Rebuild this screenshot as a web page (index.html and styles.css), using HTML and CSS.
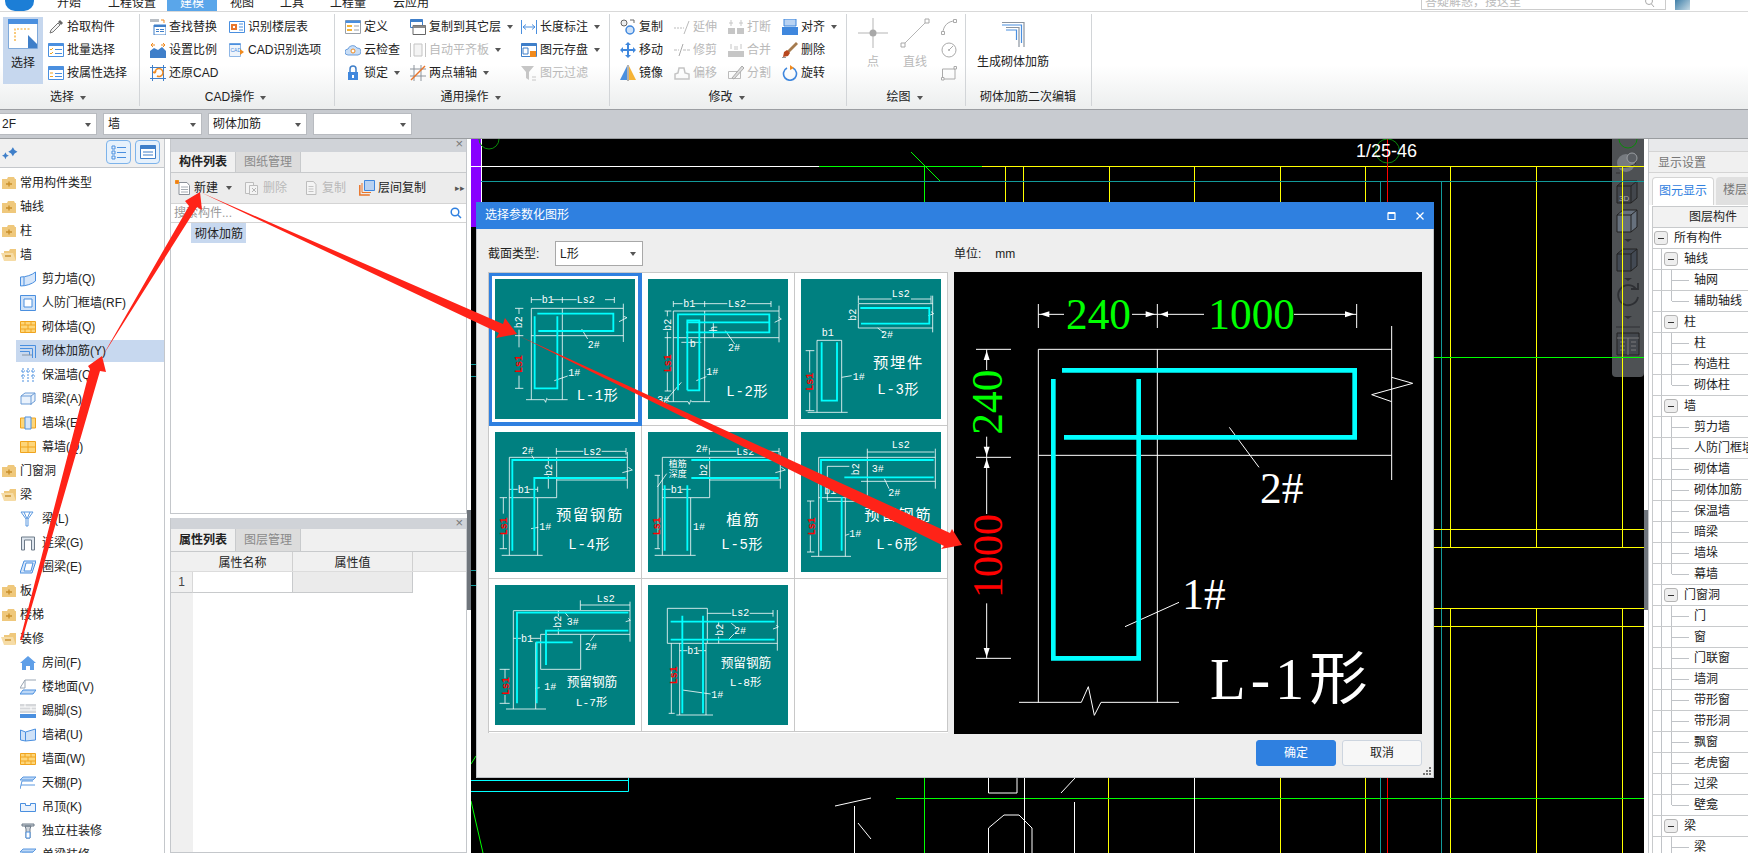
FILE: index.html
```html
<!DOCTYPE html>
<html lang="zh-CN">
<head>
<meta charset="utf-8">
<title>砌体加筋</title>
<link rel="stylesheet" href="styles.css">
</head>
<body>
<svg class="defs" aria-hidden="true">
  <defs>
    <symbol id="fp" viewBox="0 0 16 14"><path d="M1 3h5l1-2h6l1 2h1v10H1z" fill="#efc87c"/><path d="M5 8h6M8 5.500v5" stroke="#c98f2b" stroke-width="1.400"/></symbol>
    <symbol id="fm" viewBox="0 0 16 14"><path d="M3 3h5l1-2h6v11H3z" fill="#efc87c"/><path d="M0 5h12l3 8H3z" fill="#f6dca6"/><path d="M4 8h6" stroke="#c98f2b" stroke-width="1.400"/></symbol>
    <symbol id="brick" viewBox="0 0 16 12"><path d="M.5.5h15v11H.5z" fill="#fdd67a" stroke="#f0a41e"/><path d="M.5 4h15M.5 8h15M5 .5V4M11 .5V4M8 4v4M5 8v3.500M11 8v3.500" stroke="#f0a41e" fill="none"/></symbol>
    <symbol id="rebar" viewBox="0 0 16 16"><path d="M0 2.500h15.500V15M0 5.500h12.500V15M0 8.500h9.500V12" fill="none" stroke="#4a8fdf"/><path d="M2 12h10" stroke="#8a94a0"/></symbol>
    <symbol id="t1" viewBox="0 0 16 16"><path d="M.5 6C6 6 12 4 15.500 1v9C12 13 6 15 .5 15z" fill="#d6e6fa" stroke="#4a8fdf"/><path d="M4 6v9" stroke="#4a8fdf"/></symbol>
    <symbol id="t2" viewBox="0 0 16 16"><path d="M.5.5h15v15H.5z" fill="#cfe2f8" stroke="#4a8fdf"/><path d="M4 4h8v8H4z" fill="#fff" stroke="#4a8fdf"/></symbol>
    <symbol id="t3" viewBox="0 0 16 16"><path d="M3 1v14M8 1v14M13 1v14M1 4h4M6 4h4M11 4h4M1 9h4M11 9h4" stroke="#4a8fdf" stroke-dasharray="2 1" fill="none"/></symbol>
    <symbol id="t4" viewBox="0 0 16 16"><path d="M1 5l4-3h10v8l-4 3H1zM1 5h10v9M11 5l4-3" fill="#eaf2fc" stroke="#6b9bd5"/></symbol>
    <symbol id="t5" viewBox="0 0 16 14"><path d="M.5 2h15v10H.5z" fill="#fdd67a" stroke="#f0a41e"/><path d="M5 1h6v12H5z" fill="#d6e6fa" stroke="#4a8fdf"/></symbol>
    <symbol id="t6" viewBox="0 0 16 12"><path d="M.5.5h15v11H.5z" fill="#fdd67a" stroke="#f0a41e"/><path d="M.5 6h15M8 .5v11" stroke="#f0a41e"/></symbol>
    <symbol id="t7" viewBox="0 0 16 16"><path d="M1 1h12L8 8v7H6V8zM4 1l3 7 3-7" fill="#fff" stroke="#5a98e0"/></symbol>
    <symbol id="t8" viewBox="0 0 16 16"><path d="M1.500 15V2h13v13h-3V5h-7v10z" fill="#dfe6ee" stroke="#6d7a88"/></symbol>
    <symbol id="t9" viewBox="0 0 16 14"><path d="M4 1h12l-4 12H0z" fill="#d6e6fa" stroke="#4a8fdf"/><path d="M6 3h7l-2 8H4z" fill="#fff" stroke="#4a8fdf"/></symbol>
    <symbol id="t10" viewBox="0 0 16 16"><path d="M0 8l8-7 8 7h-2v7H2V8z" fill="#5f9fe8"/><path d="M6 15v-4h4v4z" fill="#fff"/></symbol>
    <symbol id="t11" viewBox="0 0 16 16"><path d="M5 1h11M5 1v8H0M0 9l5-8" fill="none" stroke="#9aa6b4"/><path d="M3 11h13l-3 4H0z" fill="#bcd7f6" stroke="#4a8fdf"/></symbol>
    <symbol id="t12" viewBox="0 0 16 14"><path d="M0 0h16v9H0z" fill="#d5d7da"/><path d="M0 3h16M0 6h16M5 0v3M11 3v3" stroke="#fff"/><path d="M0 10h16v4H0z" fill="#4a8fdf"/></symbol>
    <symbol id="t13" viewBox="0 0 16 14"><path d="M.5 2l5 2v9l-5-1zM5.500 4l10-3v11l-10 1z" fill="#cfe2f8" stroke="#4a8fdf"/></symbol>
    <symbol id="t14" viewBox="0 0 16 14"><path d="M3 1h13l-3 3H0zM1 9h14M2 5h11M2 5L0 13" fill="#bcd7f6" stroke="#5a98e0"/></symbol>
    <symbol id="t15" viewBox="0 0 16 12"><path d="M.5 2.500h5v2h5v-2h5v8H.5z" fill="#eaf2fc" stroke="#4a8fdf"/></symbol>
    <symbol id="t16" viewBox="0 0 16 16"><path d="M2 1h12v2H2zM5 3h6l-1 3v9H6V6z" fill="#cfd4da" stroke="#6d7a88"/><path d="M6 9h4v6H6z" fill="#fff" stroke="#4a8fdf"/></symbol>

    <symbol id="r-pick" viewBox="0 0 16 16"><path d="M2 14l1-3 7-7 2 2-7 7z" fill="#f3f3f3" stroke="#777"/><path d="M10 3l2-2 3 3-2 2z" fill="#666"/></symbol>
    <symbol id="r-batch" viewBox="0 0 16 16"><path d="M.5 1.500h15v13H.5z" fill="#fff" stroke="#4a8fdf"/><path d="M.5 1.500h15V4H.5z" fill="#4a8fdf"/><path d="M2 7l1 1 2-2M2 11l1 1 2-2" stroke="#f0a41e" fill="none"/><path d="M7 7.500h7M7 11.500h7" stroke="#4a8fdf"/></symbol>
    <symbol id="r-attr" viewBox="0 0 16 16"><path d="M.5 1.500h15v13H.5z" fill="#fff" stroke="#4a8fdf"/><path d="M.5 1.500h15V5H.5z" fill="#4a8fdf"/><path d="M2 8h3M2 11.500h3" stroke="#f0a41e"/><path d="M7 8.500h7M7 11.500h7" stroke="#4a8fdf"/></symbol>
    <symbol id="r-find" viewBox="0 0 16 16"><path d="M0 0h9v3H0z" fill="#b9bec4"/><path d="M4 6h12v10H4z" fill="#fff" stroke="#3f7fc9"/><path d="M4 6h12v2H4zM6 10h3v1H6zM6 12h3v1H6zM10 10h4v1h-4zM10 12h4v1h-4z" fill="#3f7fc9"/><path d="M11 1h3v3" fill="none" stroke="#f08a1e"/></symbol>
    <symbol id="r-floor" viewBox="0 0 16 16"><path d="M.5 2.500h15v11H.5z" fill="#fff" stroke="#4a8fdf"/><path d="M2 5h6v6H2z" fill="#e9752a"/><path d="M4 7h2v2H4z" fill="#fff"/><path d="M10 5h4M10 8h4M10 11h4" stroke="#4a8fdf"/></symbol>
    <symbol id="r-scale" viewBox="0 0 16 16"><path d="M0 16V9l4-3 4 2 4-3 4 4v7z" fill="#3f7fc9"/><path d="M1 3h4M15 3h-4M1 3l2-2M1 3l2 2M15 3l-2-2M15 3l-2 2" stroke="#f08a1e" fill="none"/></symbol>
    <symbol id="r-cadopt" viewBox="0 0 16 16"><path d="M.5 1.500h11v13H.5z" fill="#eef4fb" stroke="#8fb7e6"/><path d="M.5 1.500h11V3H.5z" fill="#4a8fdf"/><text x="1.500" y="10" font-size="5" fill="#4a8fdf" font-family="Liberation Sans">CAD</text><path d="M11 7l4 3-4 3z" fill="#f08a1e"/></symbol>
    <symbol id="r-restore" viewBox="0 0 16 16"><path d="M2.500 0v16M13.500 0v16M0 2.500h16M0 13.500h16" stroke="#3f7fc9" fill="none"/><path d="M5 8a4 4 0 1 1 2 3M5 8l-2-1M5 8l1-2" stroke="#f08a1e" fill="none" stroke-width="1.500"/></symbol>
    <symbol id="r-def" viewBox="0 0 16 16"><path d="M.5 1.500h15v13H.5z" fill="#fff" stroke="#9aa0a8"/><path d="M.5 1.500h15V4H.5z" fill="#4a8fdf"/><path d="M2 6h5v2H2zM2 10h5v2H2z" fill="#f5b335"/><path d="M9 7h5M9 11h5" stroke="#9aa0a8"/></symbol>
    <symbol id="r-cloud" viewBox="0 0 16 16"><path d="M3 13a3 3 0 0 1 0-6 5 5 0 0 1 9-1 3.500 3.500 0 0 1 1 7z" fill="#c9def6" stroke="#6d9fdc"/><circle cx="8" cy="9" r="2" fill="#fff" stroke="#f08a1e"/></symbol>
    <symbol id="r-lock" viewBox="0 0 16 16"><path d="M5 7V4a3 3 0 0 1 6 0v3" fill="none" stroke="#3f7fc9" stroke-width="1.500"/><path d="M3 7h10v8H3z" fill="#3f87dd"/><path d="M7 10h2v3H7z" fill="#fff"/></symbol>
    <symbol id="r-copyfl" viewBox="0 0 16 16"><path d="M.5 .5h12v8H.5z" fill="#fff" stroke="#3f7fc9"/><path d="M.5.5h12V3H.5z" fill="#3f7fc9"/><path d="M3 6.500h12.500v9H3z" fill="#fff" stroke="#666"/><path d="M3 6.500h12.500V9H3z" fill="#888"/></symbol>
    <symbol id="r-align" viewBox="0 0 16 16"><path d="M.5 1v14M15.500 1v14" stroke="#c4c4c4"/><path d="M4 2h8v12H4z" fill="#f4f4f4" stroke="#c4c4c4"/></symbol>
    <symbol id="r-axis" viewBox="0 0 16 16"><path d="M0 4h16M0 11h16M4 0v16M11 0v16" stroke="#8d949c"/><path d="M1 15L15 1" stroke="#e9752a" stroke-width="1.400"/></symbol>
    <symbol id="r-len" viewBox="0 0 16 16"><path d="M.5 1v14M15.500 1v14M2 8h12M2 8l3-2.500M2 8l3 2.500M14 8l-3-2.500M14 8l-3 2.500" stroke="#4a8fdf" fill="none"/></symbol>
    <symbol id="r-save" viewBox="0 0 16 16"><path d="M.5 1.500h15v13H.5z" fill="#fff" stroke="#3f7fc9"/><path d="M.5 1.500h15V4H.5z" fill="#3f7fc9"/><path d="M2 6h5v6H2z" fill="#fff" stroke="#3f7fc9"/><path d="M9 9h6v6H9z" fill="#f08a1e"/></symbol>
    <symbol id="r-filter" viewBox="0 0 16 16"><path d="M0 1h13L8 7v8L5 13V7z" fill="#c6c6c6"/><path d="M11 12h4M11 15h4" stroke="#c6c6c6"/></symbol>
    <symbol id="r-copy" viewBox="0 0 16 16"><circle cx="4" cy="4" r="3" fill="#eee" stroke="#666"/><circle cx="10" cy="11" r="4" fill="#cfe2f8" stroke="#3f87dd" stroke-width="1.500"/><path d="M10 1h4v3" fill="none" stroke="#666"/></symbol>
    <symbol id="r-move" viewBox="0 0 16 16"><path d="M8 0l3 3H9v4h4V5l3 3-3 3V9H9v4h2l-3 3-3-3h2V9H3v2L0 8l3-3v2h4V3H5z" fill="#3f87dd"/></symbol>
    <symbol id="r-mirror" viewBox="0 0 16 16"><path d="M7 1v14H0z" fill="#4a8fdf"/><path d="M9 1v14h7z" fill="#f5b335"/><path d="M8 0v16" stroke="#666"/></symbol>
    <symbol id="r-ext" viewBox="0 0 16 16"><path d="M0 9h10" stroke="#bbb" stroke-dasharray="2 1"/><path d="M10 15L15 2" stroke="#bbb"/></symbol>
    <symbol id="r-trim" viewBox="0 0 16 16"><path d="M0 8h5M9 8h7" stroke="#bbb" stroke-dasharray="3 1"/><path d="M5 14L9 2" stroke="#aaa"/></symbol>
    <symbol id="r-offset" viewBox="0 0 16 16"><path d="M1 14V9l3-1 1-5h5l1 5 4 1v5z" fill="none" stroke="#c4c4c4" stroke-width="1.500"/></symbol>
    <symbol id="r-break" viewBox="0 0 16 16"><path d="M0 9h7v6H0zM9 9h7v6H9z" fill="#c6c6c6"/><path d="M3 1v6M13 1v6M1 4h4M11 4h4" stroke="#c6c6c6"/></symbol>
    <symbol id="r-merge" viewBox="0 0 16 16"><path d="M0 9h16v6H0z" fill="#c6c6c6"/><path d="M3 2v5M13 2v5M7 8V4M9 8V4" stroke="#c6c6c6"/></symbol>
    <symbol id="r-split" viewBox="0 0 16 16"><path d="M.5 6.500h12v7H.5z" fill="none" stroke="#bbb"/><path d="M4 13L14 1l2 2L6 14z" fill="#ddd" stroke="#aaa"/></symbol>
    <symbol id="r-alignobj" viewBox="0 0 16 16"><path d="M2 0h12v7H2z" fill="#b8d2f2" stroke="#3f87dd"/><path d="M0 8h16v8H0z" fill="#3f87dd"/></symbol>
    <symbol id="r-del" viewBox="0 0 16 16"><path d="M5 9L14 0l2 2-9 9z" fill="#a57b4e"/><path d="M1 15l1-5 3-2 3 3-2 3z" fill="#b8471e"/><path d="M0 16h4" stroke="#333"/></symbol>
    <symbol id="r-rot" viewBox="0 0 16 16"><path d="M5 3a6.500 6.500 0 1 0 6 0" fill="none" stroke="#3f87dd" stroke-width="1.600"/><path d="M8 0v5l4-2z" fill="#f08a1e"/></symbol>
    <symbol id="r-arc" viewBox="0 0 16 16"><path d="M2 14C2 7 7 2 14 2" fill="none" stroke="#aaa"/><path d="M.5 12.500h3v3h-3zM12.500.5h3v3h-3z" fill="#fff" stroke="#aaa"/></symbol>
    <symbol id="r-circ" viewBox="0 0 16 16"><circle cx="8" cy="8" r="7" fill="none" stroke="#aaa"/><path d="M8 8l4-4" stroke="#aaa"/><circle cx="8" cy="8" r="1" fill="#aaa"/></symbol>
    <symbol id="r-rect" viewBox="0 0 16 16"><path d="M1.500 4h12.500v10H1.500z" fill="none" stroke="#aaa"/><path d="M.5 12.500h2.500v2.500H.5zM13 1.500h2.500V4H13z" fill="#fff" stroke="#aaa"/></symbol>
    <symbol id="p-new" viewBox="0 0 16 16"><path d="M4 2.500h8l2.500 3v9H4z" fill="#fff" stroke="#8a9098"/><path d="M6 7h7M6 9.500h7M6 12h7" stroke="#a5abb2"/><path d="M0 0h4v4H0z" fill="#f5a623"/><path d="M2 0v4M0 2h4" stroke="#e85a1e" stroke-width=".7"/></symbol>
    <symbol id="p-del" viewBox="0 0 16 16"><path d="M1.500 2.500h8v11h-8z" fill="#f4f4f4" stroke="#bdbdbd"/><path d="M5.500 5.500h8v9h-8z" fill="#f4f4f4" stroke="#bdbdbd"/><path d="M8 8l4 4M12 8l-4 4" stroke="#b5b5b5"/></symbol>
    <symbol id="p-copy" viewBox="0 0 16 16"><path d="M3.500 1.500h7l2.500 3v10H3.500z" fill="#f4f4f4" stroke="#bdbdbd"/><path d="M5.500 6.500h5M5.500 9h5M5.500 11.500h5" stroke="#c4c4c4"/></symbol>
    <symbol id="p-floor" viewBox="0 0 16 16"><path d="M.8 5v10h10" fill="none" stroke="#e9752a" stroke-width="1.500"/><path d="M3 3v9.500h9" fill="none" stroke="#e9752a"/><path d="M5.500.5h10v10h-10z" fill="#b8d2f2" stroke="#3f87dd"/></symbol>
  </defs>
</svg>

<div class="app">
  <header class="topbar">
    <div class="logo"></div>
    <nav class="tabs">
      <span class="tab t-kai">开始</span><span class="tab t-gc">工程设置</span><span class="tab tab-on">建模</span><span class="tab t-st">视图</span><span class="tab t-gj">工具</span><span class="tab t-gl">工程量</span><span class="tab t-yy">云应用</span>
    </nav>
    <div class="help">
      <span class="help-text">答疑解惑，搜这里</span>
      <svg class="help-ic" viewBox="0 0 10 10"><circle cx="4" cy="3" r="3.500" fill="none" stroke="#aaa"/><path d="M6.500 6L9 9" stroke="#aaa"/></svg>
    </div>
    <div class="avatar"></div>
  </header>

  <section class="ribbon">
    <div class="grp g1">
      <div class="grp-body">
        <div class="bigsel">
          <svg class="bigsel-ic" viewBox="0 0 30 30"><path d="M.5.500h29v29H.5z" fill="#fff" stroke="#7fa9da"/><path d="M0 0h30v5H0z" fill="#4a8fdf"/><path d="M7 22V10h16" fill="none" stroke="#f5a623" stroke-dasharray="2 1.500" stroke-width="1.200"/><path d="M20 16l9 9v4h-9z" fill="#3f7fc9"/></svg>
          <span>选择</span>
        </div>
        <div class="col">
          <div class="ri"><svg class="ic"><use href="#r-pick"/></svg>拾取构件</div>
          <div class="ri"><svg class="ic"><use href="#r-batch"/></svg>批量选择</div>
          <div class="ri"><svg class="ic"><use href="#r-attr"/></svg>按属性选择</div>
        </div>
      </div>
      <div class="grp-label">选择<i class="car"></i></div>
    </div>
    <div class="grp g2">
      <div class="grp-body">
        <div class="col w79">
          <div class="ri"><svg class="ic"><use href="#r-find"/></svg>查找替换</div>
          <div class="ri"><svg class="ic"><use href="#r-scale"/></svg>设置比例</div>
          <div class="ri"><svg class="ic"><use href="#r-restore"/></svg>还原CAD</div>
        </div>
        <div class="col">
          <div class="ri"><svg class="ic"><use href="#r-floor"/></svg>识别楼层表</div>
          <div class="ri"><svg class="ic"><use href="#r-cadopt"/></svg>CAD识别选项</div>
        </div>
      </div>
      <div class="grp-label">CAD操作<i class="car"></i></div>
    </div>
    <div class="grp g3">
      <div class="grp-body">
        <div class="col w65">
          <div class="ri"><svg class="ic"><use href="#r-def"/></svg>定义</div>
          <div class="ri"><svg class="ic"><use href="#r-cloud"/></svg>云检查</div>
          <div class="ri"><svg class="ic"><use href="#r-lock"/></svg>锁定<i class="car"></i></div>
        </div>
        <div class="col w111">
          <div class="ri"><svg class="ic"><use href="#r-copyfl"/></svg>复制到其它层<i class="car"></i></div>
          <div class="ri off"><svg class="ic"><use href="#r-align"/></svg>自动平齐板<i class="car"></i></div>
          <div class="ri"><svg class="ic"><use href="#r-axis"/></svg>两点辅轴<i class="car"></i></div>
        </div>
        <div class="col">
          <div class="ri"><svg class="ic"><use href="#r-len"/></svg>长度标注<i class="car"></i></div>
          <div class="ri"><svg class="ic"><use href="#r-save"/></svg>图元存盘<i class="car"></i></div>
          <div class="ri off"><svg class="ic"><use href="#r-filter"/></svg>图元过滤</div>
        </div>
      </div>
      <div class="grp-label">通用操作<i class="car"></i></div>
    </div>
    <div class="grp g4">
      <div class="grp-body">
        <div class="col w54">
          <div class="ri"><svg class="ic"><use href="#r-copy"/></svg>复制</div>
          <div class="ri"><svg class="ic"><use href="#r-move"/></svg>移动</div>
          <div class="ri"><svg class="ic"><use href="#r-mirror"/></svg>镜像</div>
        </div>
        <div class="col w54">
          <div class="ri off"><svg class="ic"><use href="#r-ext"/></svg>延伸</div>
          <div class="ri off"><svg class="ic"><use href="#r-trim"/></svg>修剪</div>
          <div class="ri off"><svg class="ic"><use href="#r-offset"/></svg>偏移</div>
        </div>
        <div class="col w54">
          <div class="ri off"><svg class="ic"><use href="#r-break"/></svg>打断</div>
          <div class="ri off"><svg class="ic"><use href="#r-merge"/></svg>合并</div>
          <div class="ri off"><svg class="ic"><use href="#r-split"/></svg>分割</div>
        </div>
        <div class="col">
          <div class="ri"><svg class="ic"><use href="#r-alignobj"/></svg>对齐<i class="car"></i></div>
          <div class="ri"><svg class="ic"><use href="#r-del"/></svg>删除</div>
          <div class="ri"><svg class="ic"><use href="#r-rot"/></svg>旋转</div>
        </div>
      </div>
      <div class="grp-label">修改<i class="car"></i></div>
    </div>
    <div class="grp g5">
      <div class="grp-body">
        <div class="draw">
          <svg class="draw-ic" viewBox="0 0 30 30"><path d="M0 15h30M15 0v30" stroke="#b5b5b5"/><circle cx="15" cy="15" r="3.500" fill="#a8a8a8"/></svg>
          <span>点</span>
        </div>
        <div class="draw">
          <svg class="draw-ic" viewBox="0 0 30 30"><path d="M3 27L27 3" stroke="#b5b5b5"/><path d="M1 25h4v4H1zM25 1h4v4h-4z" fill="#fff" stroke="#a8a8a8"/></svg>
          <span>直线</span>
        </div>
        <div class="col">
          <div class="ri"><svg class="ic"><use href="#r-arc"/></svg></div>
          <div class="ri"><svg class="ic"><use href="#r-circ"/></svg></div>
          <div class="ri"><svg class="ic"><use href="#r-rect"/></svg></div>
        </div>
      </div>
      <div class="grp-label">绘图<i class="car"></i></div>
    </div>
    <div class="grp g6">
      <div class="grp-body">
        <div class="gen">
          <svg class="gen-ic" viewBox="0 0 24 26"><path d="M1 1.500h22V26M5 6.500h13V26" fill="none" stroke="#8a94a0" stroke-width="1.200"/><path d="M1 4h19.500v18M5 9h10.500v10" fill="none" stroke="#4a8fdf" stroke-width="1.200"/></svg>
          <span>生成砌体加筋</span>
        </div>
      </div>
      <div class="grp-label">砌体加筋二次编辑</div>
    </div>
  </section>

  <section class="toolbar">
    <div class="dd dd-a">2F<i class="car"></i></div>
    <div class="dd">墙<i class="car"></i></div>
    <div class="dd">砌体加筋<i class="car"></i></div>
    <div class="dd"><i class="car"></i></div>
  </section>

  <main class="main">
    <aside class="tree-panel">
      <div class="tree-head">
        <svg class="spark" viewBox="0 0 14 12"><path d="M9.500 0l1.500 2.500L13.500 4 11 5.500 9.500 8 8 5.500 5.500 4 8 2.500zM3 4.500l1 2 2 1-2 1-1 2-1-2-2-1 2-1z" fill="#3f7fc9"/></svg>
        <button class="tree-btn"><svg viewBox="0 0 16 16"><path d="M1 2h3v3H1zM1 7h3v3H1zM1 12h3v3H1z" fill="none" stroke="#4a8fdf"/><path d="M6 3.500h9M6 8.500h9M6 13.500h9" stroke="#4a8fdf"/></svg></button>
        <button class="tree-btn"><svg viewBox="0 0 16 16"><path d="M.5 1.500h15v13H.5z" fill="#fff" stroke="#3f7fc9"/><path d="M.5 1.500h15V5H.5z" fill="#3f7fc9"/><path d="M3 8h10M3 11h10" stroke="#3f7fc9"/></svg></button>
      </div>
      <ul class="tree">
        <li class="tr"><svg class="fd"><use href="#fp"/></svg>常用构件类型</li>
        <li class="tr"><svg class="fd"><use href="#fp"/></svg>轴线</li>
        <li class="tr"><svg class="fd"><use href="#fp"/></svg>柱</li>
        <li class="tr"><svg class="fd"><use href="#fm"/></svg>墙</li>
        <li class="tr ch"><svg class="ci"><use href="#t1"/></svg>剪力墙(Q)</li>
        <li class="tr ch"><svg class="ci"><use href="#t2"/></svg>人防门框墙(RF)</li>
        <li class="tr ch"><svg class="ci"><use href="#brick"/></svg>砌体墙(Q)</li>
        <li class="tr ch sel"><svg class="ci"><use href="#rebar"/></svg>砌体加筋(Y)</li>
        <li class="tr ch"><svg class="ci"><use href="#t3"/></svg>保温墙(Q)</li>
        <li class="tr ch"><svg class="ci"><use href="#t4"/></svg>暗梁(A)</li>
        <li class="tr ch"><svg class="ci"><use href="#t5"/></svg>墙垛(E)</li>
        <li class="tr ch"><svg class="ci"><use href="#t6"/></svg>幕墙(Q)</li>
        <li class="tr"><svg class="fd"><use href="#fp"/></svg>门窗洞</li>
        <li class="tr"><svg class="fd"><use href="#fm"/></svg>梁</li>
        <li class="tr ch"><svg class="ci"><use href="#t7"/></svg>梁(L)</li>
        <li class="tr ch"><svg class="ci"><use href="#t8"/></svg>连梁(G)</li>
        <li class="tr ch"><svg class="ci"><use href="#t9"/></svg>圈梁(E)</li>
        <li class="tr"><svg class="fd"><use href="#fp"/></svg>板</li>
        <li class="tr"><svg class="fd"><use href="#fp"/></svg>楼梯</li>
        <li class="tr"><svg class="fd"><use href="#fm"/></svg>装修</li>
        <li class="tr ch"><svg class="ci"><use href="#t10"/></svg>房间(F)</li>
        <li class="tr ch"><svg class="ci"><use href="#t11"/></svg>楼地面(V)</li>
        <li class="tr ch"><svg class="ci"><use href="#t12"/></svg>踢脚(S)</li>
        <li class="tr ch"><svg class="ci"><use href="#t13"/></svg>墙裙(U)</li>
        <li class="tr ch"><svg class="ci"><use href="#brick"/></svg>墙面(W)</li>
        <li class="tr ch"><svg class="ci"><use href="#t14"/></svg>天棚(P)</li>
        <li class="tr ch"><svg class="ci"><use href="#t15"/></svg>吊顶(K)</li>
        <li class="tr ch"><svg class="ci"><use href="#t16"/></svg>独立柱装修</li>
        <li class="tr ch"><svg class="ci"><use href="#t14"/></svg>单梁装修</li>
      </ul>
    </aside>

    <section class="mid">
      <div class="pane pane-a">
        <div class="strip"><span class="x">×</span></div>
        <div class="ptabs"><span class="ptab on">构件列表</span><span class="ptab">图纸管理</span></div>
        <div class="ptool">
          <span class="pt pt-new"><svg class="ic"><use href="#p-new"/></svg>新建<i class="car"></i></span>
          <span class="pt off"><svg class="ic"><use href="#p-del"/></svg>删除</span>
          <span class="pt off"><svg class="ic"><use href="#p-copy"/></svg>复制</span>
          <span class="pt"><svg class="ic"><use href="#p-floor"/></svg>层间复制</span>
          <span class="more">▸▸</span>
        </div>
        <div class="psearch"><span>搜索构件...</span><svg class="s-ic" viewBox="0 0 12 12"><circle cx="5" cy="5" r="3.800" fill="none" stroke="#2f80e0" stroke-width="1.500"/><path d="M8 8l3 3" stroke="#2f80e0" stroke-width="1.500"/></svg></div>
        <div class="plist"><span class="pitem">砌体加筋</span></div>
      </div>
      <div class="pane pane-b">
        <div class="strip strip-b"><span class="x">×</span></div>
        <div class="ptabs ptabs-b"><span class="ptab on">属性列表</span><span class="ptab">图层管理</span></div>
        <div class="prop">
          <div class="prop-head"><span class="ph-name">属性名称</span><span class="ph-val">属性值</span></div>
          <div class="prop-row"><span class="pr-num">1</span><span class="pr-name"></span><span class="pr-val"></span></div>
        </div>
      </div>
    </section>

    <div class="split"><div class="handle"></div></div>

    <section class="canvas">
      <div class="rail">
        <svg class="rail-svg" viewBox="0 0 32 238">
          <circle cx="14" cy="24" r="9" fill="#777b80"/><circle cx="20" cy="19" r="5" fill="#5a5e63" stroke="#9a9ea2"/><path d="M4 34h4M6 28a14 6 0 0 0 18-4" stroke="#333" fill="none"/>
          <path d="M5 47l6-5h14v17l-6 5H5zM5 47h14v17M19 47l6-5" fill="#43474d" stroke="#222"/><text x="7" y="62" font-size="8" fill="#aaa" font-family="Liberation Sans">3D</text>
          <path d="M5 76l6-5h14v17l-6 5H5zM5 76h14v17M19 76l6-5" fill="#67717d" stroke="#222"/><path d="M12 100h8l-4 3z" fill="#2e3034"/>
          <path d="M5 115l6-5h14v17l-6 5H5zM5 115h14v17M19 115l6-5" fill="#434a54" stroke="#222"/><path d="M12 139h8l-4 3z" fill="#2e3034"/>
          <path d="M24 150a10 10 0 1 0 2 8" fill="none" stroke="#2e3034" stroke-width="1.800"/><path d="M19 150h7v-6" fill="none" stroke="#2e3034" stroke-width="1.800"/><path d="M12 177h8l-4 3z" fill="#2e3034"/>
          <path d="M4 188h24" stroke="#2e3034"/>
          <path d="M5 194h22v22H5z" fill="#43474d" stroke="#222"/><path d="M5 199h22M16 199v17M8 203h5M8 207h5M8 211h5M19 203h5M19 207h5M19 211h5" stroke="#888" stroke-width=".8"/>
        </svg>
      </div>

      <svg class="cad" viewBox="471 139 1173 714">
        <path d="M471 139h10v88h-10z" fill="#8800ff"/>
        <g class="ln">
          <path class="wh" d="M471 166.500H819M481.500 139v63"/>
          <path class="gr" d="M819 166.500H982M924.500 166v37M911 152l29 29"/>
          <path class="ye" d="M982 166.500H1644M1005.500 166v37M1023.500 166v37M1109.500 166v37M1194.500 166v37M1280.500 166v37M1365.500 166v37M1450.500 166V547M1536.500 166V547M1622.500 166V547M1450.500 608V853M1536.500 608V853M1622.500 608V853"/>
          <path class="te" d="M481 181.500H1644M1380.500 181v22M1441.500 181V853M471 364.500h5M471 376.500h5M471 570.500h5M471 585.500h5"/>
          <path class="re" d="M1387.500 139v64M1387.500 778v75"/>
          <path class="ye" d="M1434 529.500h210M1434 547.500h210M1434 608.500h210M1434 626.500h210M1108.500 778v75M1280.500 778v75M1365.500 778v75"/>
          <path class="gr" d="M1434 357.500h210M896 798.500H1644M924.500 778v75M471 764l5-8M471 801l12 52"/>
          <path class="cy" d="M471 780.500H628.500V778M471 791.500H628.500V780"/>
          <path class="te" d="M1380.500 778v75"/>
          <path class="wh" d="M1024.500 778v75M1074.500 802v51M1194.500 778v75M854.500 806v47M835 806l36-8M858 823l13 16M988.500 778v15H1017V778M1075 778l-14 15M988.500 853v-25L1004 815h15l13 13v25"/>
          <circle cx="1387.500" cy="151" r="12" class="dg"/>
          <circle cx="489" cy="139" r="10" class="dg"/>
          <circle cx="1628" cy="139" r="9" class="dg"/>
        </g>
        <text x="1356" y="157" class="cad-t">1/25-46</text>
      </svg>

      <div class="dialog">
        <div class="dlg-title">
          <span>选择参数化图形</span>
          <svg class="dlg-c c-max" viewBox="0 0 10 10"><path d="M1 2h7v6.500H1z" fill="none" stroke="#fff" stroke-width="1.200"/><path d="M1 2h7" stroke="#fff" stroke-width="2"/></svg>
          <svg class="dlg-c c-x" viewBox="0 0 10 10"><path d="M1.500 1.500l7 7M8.500 1.500l-7 7" stroke="#fff" stroke-width="1.300"/></svg>
        </div>
        <div class="dlg-body">
          <div class="dlg-top">
            <div class="dlg-type"><span class="lab">截面类型:</span><div class="dsel">L形<i class="car"></i></div></div>
            <div class="dlg-unit"><span>单位:</span><span class="mm">mm</span></div>
          </div>
          <div class="dlg-mid">
            <div class="grid">
              <div class="cell cell-on">
                <svg class="th" viewBox="0 0 420 420">
                  <path class="w" d="M109 62H140M170 62H245M330 62H358M109 54V72M202 54V72M358 54V72M109 88H385M109 170H385M109 88V362M202 88V362M385 74V189M372 128l24-12-10-4M93 362H148l4 8 3-12 4 4H218M60 88H85M60 170H85M60 328H85M72 88V105M72 152V205M72 290V328M260 150l18 30M178 305l40-14"/>
                  <path class="c" d="M127 104H355V156H130M119 112V328H187V112"/>
                  <text class="t" x="140" y="72">b1</text><text class="t" x="245" y="72">Ls2</text>
                  <text class="t" transform="translate(82 148) rotate(-90)">b2</text><text class="r" transform="translate(82 282) rotate(-90)">Ls1</text>
                  <text class="t" x="278" y="206">2#</text><text class="t" x="220" y="292">1#</text>
                  <text class="tl" x="245" y="362">L-1形</text>
                </svg>
              </div>
              <div class="cell">
                <svg class="th" viewBox="0 0 420 420">
                  <path class="w" d="M76 74H104M136 74H238M296 74H369M76 66V84M170 66V84M369 66V84M76 96H393M76 176H393M76 96V368M170 96V368M393 80V190M380 130l20-10-8-6M50 96H70M50 176H70M50 336H70M58 96V112M58 158V232M58 280V336M40 380L100 310M145 305l30-12M232 155l28 40M100 190H160M196 130V175M60 368H120l4 8 4-12 4 4H186"/>
                  <path class="c" d="M90 334V106H364V160H114M118 334V124H154V334H118M115 130H364"/>
                  <text class="t" x="106" y="84">b1</text><text class="t" x="240" y="84">Ls2</text>
                  <text class="t" transform="translate(68 155) rotate(-90)">b2</text><text class="r" transform="translate(68 280) rotate(-90)">Ls1</text>
                  <text class="t" x="125" y="205">b</text><text class="t" transform="translate(208 158) rotate(-90)">h</text>
                  <text class="t" x="240" y="216">2#</text><text class="t" x="175" y="288">1#</text><text class="t" x="28" y="372">3#</text>
                  <text class="tl" x="235" y="350">L-2形</text>
                </svg>
              </div>
              <div class="cell">
                <svg class="th" viewBox="0 0 420 420">
                  <path class="w" d="M172 60H272M330 60H390M172 50V72M390 50V72M172 74H395M172 147H395M172 74V147M395 50V160M382 110l16-6-8-6M48 184V400M122 184V400M48 184H122M20 400H140M230 147l20 15M122 295l30-5M14 215H40M14 395H40M26 215V280M26 340V395"/>
                  <path class="c" d="M178 87H385V134H180M62 190V365H108V190"/>
                  <text class="t" x="272" y="55">Ls2</text><text class="t" transform="translate(165 125) rotate(-90)">b2</text>
                  <text class="t" x="240" y="178">2#</text><text class="t" x="62" y="172">b1</text><text class="t" x="155" y="303">1#</text>
                  <text class="r" transform="translate(36 335) rotate(-90)">Ls1</text>
                  <text class="tc" x="216" y="268">预埋件</text><text class="tl" x="229" y="345">L-3形</text>
                </svg>
              </div>
              <div class="cell">
                <svg class="th" viewBox="0 0 420 420">
                  <path class="w" d="M184 58H265M320 58H393M184 48V68M393 48V68M43 76H397M43 76V370M185 76V197M43 197H185M128 197V370M185 144H397M397 60V170M382 122l30-8-12-8M43 172H68M100 172H128M128 164V180M160 76V98M160 132V170M14 197H36M14 350H36M25 197V245M25 305V350M20 370H143M110 70l10 16M108 290l22-4"/>
                  <path class="c" d="M392 84H52V356M392 138H118V356"/>
                  <text class="t" x="80" y="66">2#</text><text class="t" x="265" y="68">Ls2</text>
                  <text class="t" transform="translate(170 132) rotate(-90)">b2</text><text class="t" x="68" y="182">b1</text>
                  <text class="r" transform="translate(36 310) rotate(-90)">Ls1</text><text class="t" x="133" y="293">1#</text>
                  <text class="tc" x="183" y="265">预留钢筋</text><text class="tl" x="220" y="350">L-4形</text>
                </svg>
              </div>
              <div class="cell">
                <svg class="th" viewBox="0 0 420 420">
                  <path class="w" d="M184 58H265M320 58H393M184 48V68M393 48V68M43 76H397M43 76V370M185 76V197M43 197H185M128 197V370M185 144H397M397 60V170M382 122l30-8-12-8M43 172H68M100 172H128M20 370H143M30 130V350M20 130H36M20 350H36M28 165l28-40"/>
                  <path class="c" d="M130 84H392M130 138H392M50 160V356M118 160V356"/>
                  <text class="t" x="143" y="60">2#</text><text class="t" x="265" y="68">Ls2</text>
                  <text class="t" transform="translate(176 132) rotate(-90)">b2</text><text class="t" x="68" y="182">b1</text>
                  <text class="ts" x="62" y="104">植筋</text><text class="ts" x="62" y="134">深度</text>
                  <text class="r" transform="translate(36 310) rotate(-90)">Ls1</text><text class="t" x="135" y="293">1#</text>
                  <text class="tc" x="235" y="278">植筋</text><text class="tl" x="220" y="350">L-5形</text>
                </svg>
              </div>
              <div class="cell">
                <svg class="th" viewBox="0 0 420 420">
                  <path class="w" d="M199 60H400M199 50V205M403 50V170M53 76H403M53 76V373M53 197H199M133 197V373M79 103V205M79 103H145M79 208H199M180 148H403M30 373H150M18 207H40M18 360H40M28 207V260M28 310V360M250 140l14 30M133 310l12-4"/>
                  <path class="c" d="M398 84H60V356M398 136H130M122 195V356"/>
                  <text class="t" x="272" y="48">Ls2</text><text class="t" transform="translate(175 130) rotate(-90)">b2</text>
                  <text class="t" x="212" y="120">3#</text><text class="t" x="262" y="192">2#</text><text class="t" x="70" y="187">b1</text>
                  <text class="r" transform="translate(42 310) rotate(-90)">Ls1</text><text class="t" x="145" y="315">1#</text>
                  <text class="tc" x="190" y="265">预留钢筋</text><text class="tl" x="226" y="350">L-6形</text>
                </svg>
              </div>
              <div class="cell">
                <svg class="th" viewBox="0 0 420 420">
                  <path class="w" d="M256 60H405M256 46V75M405 50V170M55 77H405M55 77V372M137 148H405M137 148V253H257V148M122 172V372M33 372H153M55 160H78M108 160H137M14 253H44M14 355H44M30 253V280M30 330V355M190 77V95M190 130V148M210 83l10 12M300 148l-14 20M122 310l12-2M392 110l14-4-6-6"/>
                  <path class="c" d="M400 83H66V355M400 137H153V240M233 172H125V355"/>
                  <text class="t" x="305" y="52">Ls2</text><text class="t" transform="translate(198 128) rotate(-90)">b2</text>
                  <text class="t" x="215" y="120">3#</text><text class="t" x="270" y="194">2#</text><text class="t" x="78" y="170">b1</text>
                  <text class="r" transform="translate(42 330) rotate(-90)">Ls1</text><text class="t" x="148" y="316">1#</text>
                  <text class="tm" x="215" y="303">预留钢筋</text><text class="tn" x="242" y="362">L-7形</text>
                </svg>
              </div>
              <div class="cell">
                <svg class="th" viewBox="0 0 420 420">
                  <path class="w" d="M58 70H178V175H58zM178 85H250M305 85H375M375 75V95M178 175H388M388 75V197M375 132l16-6-6-6M95 175V390M174 175V390M85 390H195M70 175V385M62 385H80M103 315l85 12M118 197H95M150 197H174M212 110V125M212 155V175M250 115l15 12M240 165l18-18"/>
                  <path class="c" d="M68 110H380M68 164H380M103 92V385M165 92V385"/>
                  <text class="t" x="250" y="92">Ls2</text><text class="t" transform="translate(224 152) rotate(-90)">b2</text>
                  <text class="t" x="258" y="146">2#</text><text class="t" x="118" y="206">b1</text>
                  <text class="r" transform="translate(86 298) rotate(-90)">Ls1</text><text class="t" x="190" y="340">1#</text>
                  <text class="tm" x="218" y="246">预留钢筋</text><text class="tn" x="245" y="304">L-8形</text>
                </svg>
              </div>
              <div class="cell"></div>
            </div>
            <div class="preview">
              <svg class="pv" viewBox="42 36 1404 1386">
                <path class="pw" d="M295 132V204M652 132V204M1250 132V204M295 163H372M576 163H652M652 163H792M1062 163H1250M295 268H1355M295 586H1355M295 268V1328M652 268V1328M1355 198V660M1355 352L1418 370L1295 404L1355 425M237 1327H424L445 1280L463 1366L483 1327H717M108 268H213M108 592H213M108 1195H213M140 268V330M140 530V762M140 1030V1195M868 502L957 622M555 1100L717 1027"/>
                <path class="pa" d="M300 163l28-9v18zM645 163l-28-9v18zM660 163l24-9v18zM1243 163l-28-9v18zM140 272l-9 28h18zM140 588l-9-28h18zM140 596l-9 28h18zM140 1192l-9-28h18z"/>
                <path class="pc" d="M366 331H1244V532H372M340 357V1195H596V357"/>
                <text class="pg" x="378" y="208">240</text><text class="pg" x="805" y="208">1000</text>
                <text class="pg" transform="translate(186 524) rotate(-90)">240</text>
                <text class="pr" transform="translate(186 1014) rotate(-90)">1000</text>
                <text class="pt-w" x="960" y="730">2#</text><text class="pt-w" x="727" y="1048">1#</text>
                <text class="pt-b" x="810" y="1318">L-1形</text>
              </svg>
            </div>
          </div>
          <div class="dlg-foot"><button class="btn btn-ok">确定</button><button class="btn">取消</button></div>
        </div>
        <svg class="grip" viewBox="0 0 9 9"><path d="M6 0h2v2H6zM3 3h2v2H3zM6 3h2v2H6zM0 6h2v2H0zM3 6h2v2H3zM6 6h2v2H6z" fill="#777"/></svg>
      </div>
    </section>

    <div class="split split-r"><div class="handle"></div></div>

    <aside class="right">
      <div class="r-strip"></div>
      <div class="r-title">显示设置</div>
      <div class="r-tabs"><span class="r-tab on">图元显示</span><span class="r-tab">楼层显示</span></div>
      <div class="r-table">
        <div class="r-head">图层构件</div>
        <div class="rw l0"><i class="bx"></i>所有构件</div>
        <div class="rw l1"><i class="bx"></i>轴线</div>
        <div class="rw l2">轴网</div>
        <div class="rw l2 end">辅助轴线</div>
        <div class="rw l1"><i class="bx"></i>柱</div>
        <div class="rw l2">柱</div>
        <div class="rw l2">构造柱</div>
        <div class="rw l2 end">砌体柱</div>
        <div class="rw l1"><i class="bx"></i>墙</div>
        <div class="rw l2">剪力墙</div>
        <div class="rw l2">人防门框墙</div>
        <div class="rw l2">砌体墙</div>
        <div class="rw l2">砌体加筋</div>
        <div class="rw l2">保温墙</div>
        <div class="rw l2">暗梁</div>
        <div class="rw l2">墙垛</div>
        <div class="rw l2 end">幕墙</div>
        <div class="rw l1"><i class="bx"></i>门窗洞</div>
        <div class="rw l2">门</div>
        <div class="rw l2">窗</div>
        <div class="rw l2">门联窗</div>
        <div class="rw l2">墙洞</div>
        <div class="rw l2">带形窗</div>
        <div class="rw l2">带形洞</div>
        <div class="rw l2">飘窗</div>
        <div class="rw l2">老虎窗</div>
        <div class="rw l2">过梁</div>
        <div class="rw l2 end">壁龛</div>
        <div class="rw l1"><i class="bx"></i>梁</div>
        <div class="rw l2">梁</div>
      </div>
    </aside>
  </main>

  <svg class="arrows" viewBox="0 0 1748 853">
    <path d="M20 640L90 369L88 366L102 356L106 372L100 371L22 640z"/>
    <path d="M102 357L189 206L185 201L200 192L202 210L197 207z"/>
    <path d="M200 192L503 324L505 318L517 334L496 338L499 333z"/>
    <path d="M517 335L950 533L952 529L962 545L941 549L944 546z"/>
  </svg>
</div>
</body>
</html>
```

FILE: styles.css
```css
* { box-sizing: border-box; }
html, body { margin: 0; padding: 0; overflow: hidden; background: #fff; }
body { font: 12px/1.2 "Liberation Sans", "Noto Sans CJK SC", sans-serif; color: #222; }
.defs { position: absolute; width: 0; height: 0; }
.app { position: relative; width: 1748px; height: 853px; overflow: hidden; display: flex; flex-direction: column; }
i { font-style: normal; }
.car { display: inline-block; width: 0; height: 0; margin-left: 6px; border-top: 4px solid #555; border-left: 3.5px solid transparent; border-right: 3.5px solid transparent; vertical-align: middle; }
.off { color: #b9b9b9; }

/* top tabs */
.topbar { height: 12px; flex: none; display: flex; border-bottom: 1px solid #d9d9d9; overflow: hidden; position: relative; }
.logo { width: 29px; height: 11px; margin-left: 5px; margin-right: 5px; background: #1c7ed6; border-radius: 0 0 10px 10px; flex: none; }
.tabs { display: flex; height: 11px; flex: none; margin-left: 18px; }
.tab { width: auto; line-height: 16px; margin-top: -5px; height: 16px; }
.t-gc { margin-left: 27px; }
.tab-on { width: 50px; margin-left: 11px; text-align: center; background: #5aa6ea; color: #fff; }
.t-st { margin-left: 13px; }
.t-gj { margin-left: 26px; }
.t-gl { margin-left: 26px; }
.t-yy { margin-left: 27px; }
.help { margin-left: 992px; width: 245px; height: 10px; border: 1px solid #ccc; border-top: 0; display: flex; align-items: flex-end; flex: none; color: #bbb; position: relative; padding-left: 3px; overflow: hidden; }
.help-text { line-height: 14px; margin-bottom: 0; white-space: nowrap; }
.help-ic { width: 10px; height: 10px; position: absolute; right: 10px; top: -2px; }
.avatar { width: 15px; height: 10px; margin-left: 9px; background: linear-gradient(135deg, #3f7fa8, #c7dbe6); flex: none; }

/* ribbon */
.ribbon { height: 98px; flex: none; display: flex; padding-top: 2px; background: linear-gradient(#fff 0, #fff 55%, #eceeee 100%); border-bottom: 1px solid #9b9ea2; }
.grp { height: 92px; display: flex; flex-direction: column; border-right: 1px solid #d2d5d8; flex: none; }
.g1 { width: 140px; padding-left: 3px; }
.g2 { width: 195px; padding-left: 10px; }
.g3 { width: 275px; padding-left: 10px; }
.g4 { width: 237px; padding-left: 10px; }
.g5 { width: 119px; padding-left: 5px; }
.g6 { width: 126px; padding-left: 11px; }
.grp-body { flex: 1; display: flex; padding-top: 2px; }
.grp-label { height: 18px; line-height: 18px; text-align: center; margin-right: 3px; white-space: nowrap; }
.g2 .grp-label, .g3 .grp-label, .g4 .grp-label { margin-left: -10px; }
.g1 .grp-label { margin-left: -3px; }
.g5 .grp-label { margin-left: -5px; }
.g6 .grp-label { margin-left: -9px; }
.bigsel { width: 40px; height: 67px; margin-right: 5px; margin-top: 1px; background: #c6d7ee; display: flex; flex-direction: column; align-items: center; }
.bigsel-ic { width: 30px; height: 30px; margin-top: 2px; margin-bottom: 7px; }
.col { display: flex; flex-direction: column; flex: none; }
.w79 { width: 79px; }
.w65 { width: 65px; }
.w111 { width: 111px; }
.w54 { width: 54px; }
.ri { height: 22.8px; display: flex; align-items: center; white-space: nowrap; }
.ic { width: 16px; height: 16px; margin-right: 3px; flex: none; }
.draw { width: 42px; display: flex; flex-direction: column; align-items: center; color: #b9b9b9; }
.draw-ic { width: 30px; height: 30px; margin-top: 2px; margin-bottom: 7px; }
.g5 .col { margin-left: 5px; }
.gen { display: flex; flex-direction: column; align-items: center; width: 72px; white-space: nowrap; }
.gen-ic { width: 24px; height: 26px; margin-top: 5px; margin-bottom: 8px; }

/* toolbar */
.toolbar { height: 29px; flex: none; display: flex; gap: 6px; padding-top: 3px; background: #c8cbd0; border-bottom: 1px solid #9a9da0; }
.dd { width: 99px; height: 22px; background: #fff; border: 1px solid #b8bbc0; padding: 0 4px; line-height: 20px; position: relative; }
.dd-a { width: 97px; border-left: 0; padding-left: 2px; }
.dd .car { position: absolute; right: 5px; top: 9px; margin: 0; }

/* main */
.main { flex: 1; display: flex; min-height: 0; }
.tree-panel { width: 165px; flex: none; border-right: 1px solid #c4c7cb; display: flex; flex-direction: column; overflow: hidden; }
.tree-head { height: 29px; flex: none; background: #f0f0f0; border-bottom: 1px solid #c4c7cb; display: flex; align-items: center; padding: 0 4px 3px 2px; gap: 4px; }
.spark { width: 16px; height: 14px; margin-right: auto; margin-top: 4px; }
.tree-btn { width: 25px; height: 24px; padding: 3px; background: #e6f1fc; border: 1px solid #7db3ea; border-radius: 4px; display: flex; align-items: center; justify-content: center; }
.tree-btn svg { width: 16px; height: 16px; }
.tree { list-style: none; margin: 0; padding: 3px 0 0; }
.tr { height: 24px; display: flex; align-items: center; white-space: nowrap; padding-left: 1px; }
.fd { width: 16px; height: 14px; margin-right: 3px; flex: none; }
.ch { padding-left: 20px; }
.ci { width: 16px; height: 16px; margin-right: 6px; flex: none; }
.sel { background: #c7d8ef; margin: 1px 0 1px 16px; height: 22px; padding-left: 4px; }

.mid { width: 297px; margin-left: 5px; flex: none; display: flex; flex-direction: column; gap: 4px; }
.pane { border: 1px solid #c4c7cb; border-top: 0; background: #fff; display: flex; flex-direction: column; }
.pane-a { height: 375px; }
.pane-b { flex: 1; min-height: 0; }
.strip { height: 13px; background: #d0d3d8; position: relative; flex: none; }
.strip-b { height: 11px; }
.x { position: absolute; right: 3px; top: -3px; color: #777; font-size: 13px; line-height: 16px; }
.ptabs { height: 21px; flex: none; display: flex; background: #f0f0f0; border-bottom: 1px solid #c8cacc; }
.ptabs-b { height: 23px; }
.ptab { width: 65px; text-align: center; line-height: 20px; background: #dcdcdc; color: #8a8a8a; border-right: 1px solid #c8cacc; }
.ptabs-b .ptab { line-height: 22px; }
.ptab.on { background: #f0f0f0; color: #222; font-weight: 700; }
.ptool { height: 31px; flex: none; display: flex; align-items: center; background: #ececec; padding-left: 4px; position: relative; border-bottom: 1px solid #d4d4d4; }
.pt { display: flex; align-items: center; }
.pt-new { width: 69px; }
.pt-new .car { margin-left: 8px; }
.pt-new + .pt { width: 59px; }
.pt-new + .pt + .pt { width: 56px; }
.more { position: absolute; right: 1px; font-size: 9px; color: #555; }
.psearch { height: 19px; flex: none; display: flex; align-items: center; justify-content: space-between; padding: 0 4px 0 3px; color: #999; border-bottom: 1px solid #d4d4d4; }
.s-ic { width: 12px; height: 12px; }
.plist { flex: 1; padding-left: 20px; }
.pitem { display: inline-block; width: 55px; height: 20px; line-height: 22px; background: #c7d8ef; padding-left: 4px; }
.prop { flex: 1; background: linear-gradient(#f0f0f0, #f0f0f0) 0 0/22px 100% no-repeat; }
.prop-head { height: 20px; display: flex; background: #f0f0f0; line-height: 22px; text-align: center; border-bottom: 1px solid #dcdcdc; }
.ph-name { width: 100px; margin-left: 22px; border-right: 1px solid #d0d0d0; }
.ph-val { width: 120px; border-right: 1px solid #d0d0d0; }
.prop-row { display: flex; height: 21px; line-height: 20px; }
.pr-num { width: 22px; text-align: center; color: #444; border-right: 1px solid #d8d8d8; border-bottom: 1px solid #c8cacc; }
.pr-name { width: 100px; background: #fff; border-right: 1px solid #c8cacc; border-bottom: 1px solid #c8cacc; }
.pr-val { width: 120px; background: #ebebeb; border-right: 1px solid #c8cacc; border-bottom: 1px solid #c8cacc; }

.split { width: 4px; flex: none; background: #fff; padding-top: 371px; }
.handle { height: 100px; background: #6f757c; }

/* canvas */
.canvas { width: 1173px; flex: none; background: #000; position: relative; overflow: hidden; }
.rail { position: absolute; left: 1141px; top: 0; width: 32px; height: 238px; background: #4e5154; border-radius: 0 0 4px 4px; }
.rail-svg { display: block; width: 32px; height: 238px; }
.cad { position: absolute; left: 0; top: 0; width: 1173px; height: 714px; display: block; }
.ln path { fill: none; stroke-width: 1; }
.wh { stroke: #fff; }
.gr { stroke: #0f0; }
.ye { stroke: #ff0; }
.te { stroke: #129a9a; }
.re { stroke: #f00; }
.cy { stroke: #0ff; }
.dg { fill: none; stroke: #0a8a0a; }
.cad-t { fill: #fff; font: 18px "Liberation Sans", sans-serif; }

.dialog { position: absolute; left: 5px; top: 63px; width: 958px; height: 576px; background: #eee; border: 1px solid #c0c4c8; border-top: 0; display: flex; flex-direction: column; }
.dlg-title { height: 27px; flex: none; margin: 0 -1px; background: #2f80e0; color: #fff; display: flex; align-items: center; padding-left: 9px; position: relative; }
.dlg-c { width: 10px; height: 10px; position: absolute; top: 9px; }
.c-max { right: 37px; }
.c-x { right: 9px; }
.dlg-body { flex: 1; display: flex; flex-direction: column; padding-left: 11px; }
.dlg-top { height: 43px; flex: none; display: flex; }
.dlg-type { width: 466px; display: flex; align-items: center; padding-top: 5px; }
.lab { width: 67px; padding-top: 3px; }
.dsel { width: 88px; height: 25px; background: #fff; border: 1px solid #a8a8a8; line-height: 25px; padding-left: 4px; position: relative; }
.dsel .car { position: absolute; right: 6px; top: 10px; margin: 0; }
.dlg-unit { display: flex; align-items: center; padding-top: 8px; }
.mm { margin-left: 14px; }
.dlg-mid { display: flex; gap: 6px; flex: none; }
.grid { width: 460px; height: 461px; display: grid; grid-template-columns: repeat(3, 153px); grid-template-rows: repeat(3, 153px); border: 1px solid #c8c8c8; border-width: 1px 0 0 1px; background: #fff; }
.cell { padding: 6px; border-right: 1px solid #c8c8c8; border-bottom: 1px solid #c8c8c8; background: #fff; }
.cell-on { box-shadow: inset 0 0 0 3px #2f80e0; border-color: #2f80e0; }
.th { display: block; width: 140px; height: 140px; background: #008080; }
.th .w { fill: none; stroke: #fff; stroke-width: 2.400; }
.th .c { fill: none; stroke: #0ff; stroke-width: 5.500; }
.th text { font-family: "Liberation Mono", "Noto Sans CJK SC", monospace; }
.th .t { fill: #fff; font-size: 30px; }
.th .r { fill: #f00; font-size: 30px; font-weight: 700; }
.th .ts { fill: #fff; font-size: 27px; font-family: "Noto Sans CJK SC", sans-serif; }
.th .tc { fill: #fff; font-size: 46px; letter-spacing: 5px; font-family: "Noto Sans CJK SC", sans-serif; }
.th .tl { fill: #fff; font-size: 42px; letter-spacing: 2px; }
.th .tm { fill: #fff; font-size: 38px; font-family: "Noto Sans CJK SC", sans-serif; }
.th .tn { fill: #fff; font-size: 34px; }
.preview { width: 468px; height: 462px; background: #000; flex: none; }
.pv { display: block; width: 468px; height: 462px; }
.pw { fill: none; stroke: #fff; stroke-width: 3; }
.pa { fill: #fff; }
.pc { fill: none; stroke: #0ff; stroke-width: 14; }
.pv text { font-family: "Liberation Serif", "Noto Sans CJK SC", serif; }
.pg { fill: #0f0; font-size: 130px; }
.pr { fill: #f00; font-size: 126px; }
.pt-w { fill: #fff; font-size: 130px; }
.pt-b { fill: #fff; font-size: 175px; letter-spacing: 15px; }
.dlg-foot { flex: 1; display: flex; justify-content: flex-end; gap: 6px; padding: 6px 11px 0 0; }
.btn { width: 80px; height: 26px; padding: 0; border: 1px solid #cdd5df; border-radius: 3px; background: #f7f7f7; color: #222; font: inherit; }
.btn-ok { background: #2f80e0; border-color: #2f80e0; color: #fff; }
.grip { position: absolute; right: 1px; bottom: 1px; width: 9px; height: 9px; }

/* arrows */
.arrows { position: absolute; left: 0; top: 0; width: 1748px; height: 853px; pointer-events: none; }
.arrows path { fill: #ff2318; }

/* right panel */
.right { width: 100px; flex: none; border-left: 1px solid #c4c7cb; background: #fff; overflow: hidden; display: flex; flex-direction: column; }
.r-strip { height: 12px; flex: none; background: #e8e9eb; }
.r-title { height: 22px; flex: none; line-height: 22px; padding-left: 9px; color: #777; background: #f0f0f0; border-top: 1px solid #d4d4d4; border-bottom: 1px solid #d4d4d4; }
.r-tabs { height: 32px; flex: none; display: flex; padding: 4px 0 0 3px; gap: 2px; background: #f4f4f4; white-space: nowrap; }
.r-tab { width: 62px; flex: none; height: 28px; line-height: 26px; text-align: center; background: #e0e0e0; color: #777; border-radius: 4px 4px 0 0; }
.r-tab.on { background: #fff; color: #2f80e0; border: 1px solid #d4d4d4; border-bottom: 0; }
.r-table { flex: 1; margin-left: 3px; margin-top: 1px; border-left: 1px solid #c8cacc; white-space: nowrap; overflow: hidden; }
.r-head { height: 22px; width: 120px; line-height: 21px; text-align: center; background: #f2f2f2; border-top: 1px solid #c8cacc; border-bottom: 1px solid #c8cacc; }
.rw { height: 21px; display: flex; align-items: center; border-bottom: 1px solid #c8cacc; line-height: 20px; background-repeat: no-repeat; }
.bx { width: 14px; height: 14px; flex: none; border: 1px solid #b5b5b5; border-radius: 3px; background: linear-gradient(#333, #333) center/6px 1px no-repeat, #eee; margin-right: 6px; }
.l0 { padding-left: 1px; }
.l1 { padding-left: 11px; background-image: linear-gradient(#c0c3c7, #c0c3c7); background-position: 8px 0; background-size: 1px 100%; }
.l2 { padding-left: 41px; background-image: linear-gradient(#c0c3c7, #c0c3c7), linear-gradient(#c0c3c7, #c0c3c7), linear-gradient(#c0c3c7, #c0c3c7); background-position: 8px 0, 18px 0, 19px 10px; background-size: 1px 100%, 1px 100%, 17px 1px; }
.end { background-size: 1px 100%, 1px 50%, 17px 1px; }
```
